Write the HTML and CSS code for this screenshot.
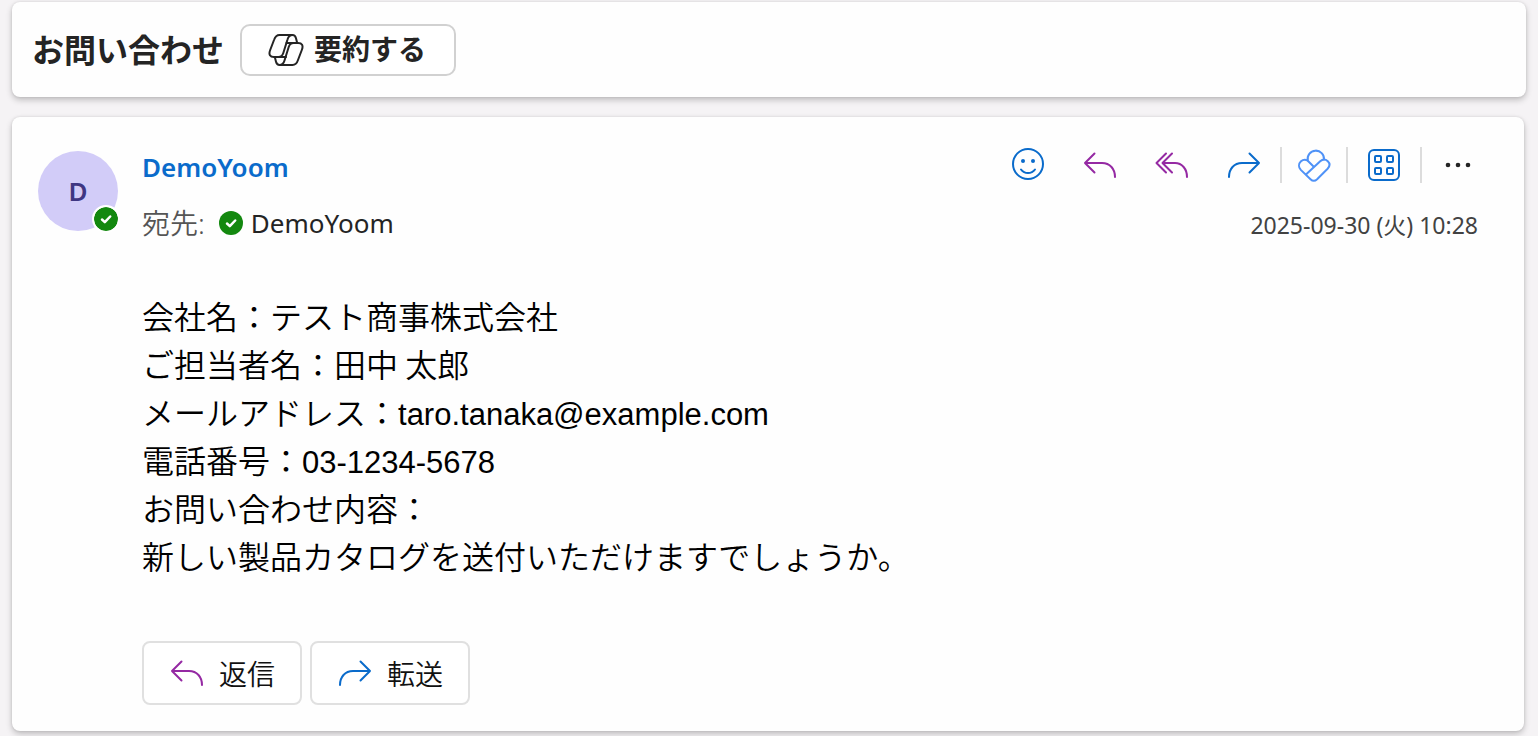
FILE: index.html
```html
<!DOCTYPE html>
<html lang="ja">
<head>
    <meta charset="UTF-8">
    <meta name="viewport" content="width=device-width, initial-scale=1.0">
    <title>お問い合わせ</title>
    <link rel="stylesheet" href="styles.css">
</head>
<body>
    <svg class="icon-defs" aria-hidden="true">
        <symbol id="icon-reply" viewBox="0 0 36 36">
            <path d="M12.500 6.500 3 16l9.500 9.500M3 16h17c8 0 13 6 13 14"/>
        </symbol>
        <symbol id="icon-reply-all" viewBox="0 0 36 36">
            <path d="M12 6.500 2.500 16l9.500 9.500M18 6.500 8.500 16l9.500 9.500M8.500 16H21c7 0 12 6 12 14"/>
        </symbol>
        <symbol id="icon-forward" viewBox="0 0 36 36">
            <path d="M23.500 6.500 33 16l-9.500 9.500M33 16H16C8 16 3 22 3 30"/>
        </symbol>
        <symbol id="icon-check" viewBox="0 0 24 24">
            <circle cx="12" cy="12" r="12"/>
            <path d="m8 12.500 2.800 2.600L16.200 9.500"/>
        </symbol>
    </svg>

    <header class="card subject">
        <h1>お問い合わせ</h1>
        <button class="summary-button" type="button">
            <svg class="icon" viewBox="0 0 36 36" aria-hidden="true">
                <path d="M24.500 3H11.500C8.500 3 7 5 6 8L2.200 18c-1.800 4.500-.2 7 3.800 7h4.500c2.500 0 4-1.500 4.800-4L19.500 7.500C20.300 4.700 21.800 3 24.500 3c2.200 0 3 1.300 3.500 3.200L29.200 11"/>
                <path d="M11.500 33h13c3 0 4.500-2 5.500-5l3.800-10c1.800-4.500.2-7-3.800-7h-4.500c-2.500 0-4 1.500-4.800 4l-4.200 13.500c-.8 2.800-2.300 4.500-5 4.500-2.200 0-3-1.300-3.500-3.200L6.800 25"/>
                <path d="M18.500 11H26M10 25h8"/>
            </svg>
            要約する
        </button>
    </header>

    <main class="card message">
        <div class="avatar">
            D
            <svg class="avatar-status" viewBox="0 0 24 24" aria-hidden="true"><use href="#icon-check"/></svg>
        </div>

        <div class="content">
            <div class="message-head">
                <div class="people">
                    <a class="sender" href="#">DemoYoom</a>
                    <div class="recipient">
                        <span class="to">宛先:</span>
                        <svg class="status" viewBox="0 0 24 24" aria-hidden="true"><use href="#icon-check"/></svg>
                        <span>DemoYoom</span>
                    </div>
                </div>

                <div class="meta">
                    <div class="toolbar">
                        <button type="button" class="blue" aria-label="リアクション">
                            <svg class="icon" viewBox="0 0 36 36">
                                <circle cx="18" cy="17" r="15"/>
                                <path d="M11 22.500c3.500 4.700 10.500 4.700 14 0"/>
                                <circle class="dot" cx="13" cy="14" r="2"/>
                                <circle class="dot" cx="23" cy="14" r="2"/>
                            </svg>
                        </button>
                        <button type="button" class="purple" aria-label="返信"><svg class="icon"><use href="#icon-reply"/></svg></button>
                        <button type="button" class="purple" aria-label="全員に返信"><svg class="icon"><use href="#icon-reply-all"/></svg></button>
                        <button type="button" class="blue" aria-label="転送"><svg class="icon"><use href="#icon-forward"/></svg></button>
                        <span class="divider"></span>
                        <button type="button" class="light-blue narrow" aria-label="アドイン">
                            <svg class="icon" viewBox="0 0 36 36">
                                <path d="M11.500 13.500c-2-1.200-4.500-1-6.500.8-2.600 2.400-2.600 6-.2 8.600l9.700 9.300c2 1.900 4.600 1.900 6.600 0l10.500-10.500c2.300-2.500 2.300-5.500.2-7.500-2.300-2.200-5.300-2.100-7.600.1L10.500 27"/>
                                <path d="M11.500 13.500 17.500 19.500M11.800 13.500a8.200 8.200 0 1 1 16.200-1"/>
                            </svg>
                        </button>
                        <span class="divider"></span>
                        <button type="button" class="blue" aria-label="アプリ">
                            <svg class="icon" viewBox="0 0 36 36">
                                <rect x="3" y="3" width="30" height="30" rx="5"/>
                                <rect x="9" y="9" width="6" height="6" rx="1"/>
                                <rect x="21" y="9" width="6" height="6" rx="1"/>
                                <rect x="9" y="21" width="6" height="6" rx="1"/>
                                <rect x="21" y="21" width="6" height="6" rx="1"/>
                            </svg>
                        </button>
                        <span class="divider"></span>
                        <button type="button" class="dark" aria-label="その他">
                            <svg class="icon" viewBox="0 0 36 36">
                                <circle class="dot" cx="8" cy="18" r="2.300"/>
                                <circle class="dot" cx="18" cy="18" r="2.300"/>
                                <circle class="dot" cx="28" cy="18" r="2.300"/>
                            </svg>
                        </button>
                    </div>
                    <time datetime="2025-09-30T10:28">2025-09-30 (火) 10:28</time>
                </div>
            </div>

            <p class="body-text">
                会社名：テスト商事株式会社<br>
                ご担当者名：田中 太郎<br>
                メールアドレス：<span class="latin">taro.tanaka@example.com</span><br>
                電話番号：<span class="latin">03-1234-5678</span><br>
                お問い合わせ内容：<br>
                新しい製品カタログを送付いただけますでしょうか。
            </p>

            <div class="actions">
                <button type="button"><svg class="icon purple"><use href="#icon-reply"/></svg>返信</button>
                <button type="button"><svg class="icon blue"><use href="#icon-forward"/></svg>転送</button>
            </div>
        </div>
    </main>
</body>
</html>
```
FILE: styles.css
```css
* {
    box-sizing: border-box;
}
body {
    margin: 0;
    padding: 2px 12px 5px;
    background: #f5f3f5;
    color: #242424;
    font-family: "Noto Sans", "Noto Sans CJK JP", sans-serif;
}
h1, p {
    margin: 0;
}
button {
    font-family: inherit;
    color: inherit;
    cursor: pointer;
}
.icon-defs {
    display: none;
}
.icon {
    width: 36px;
    height: 36px;
    fill: none;
    stroke: currentColor;
    stroke-width: 2;
    stroke-linecap: round;
    stroke-linejoin: round;
    flex: none;
}
.dot {
    fill: currentColor;
    stroke: none;
}
.card {
    background: #fefefe;
    border-radius: 8px;
    box-shadow: 0 3px 6px rgba(0, 0, 0, 0.22), 0 0 3px rgba(0, 0, 0, 0.1);
}
.subject {
    display: flex;
    align-items: center;
    gap: 16px;
    min-height: 95px;
    padding: 0 20px;
}
.subject h1 {
    font-size: 32px;
    line-height: 48px;
    font-weight: 600;
}
.summary-button {
    display: flex;
    align-items: center;
    gap: 10px;
    height: 52px;
    padding: 0 28px 4px 26px;
    border: 2px solid #d1d1d1;
    border-radius: 10px;
    background: #fff;
    font-size: 28px;
    font-weight: 600;
}
.summary-button .icon {
    margin-top: 4px;
}
.message {
    display: flex;
    gap: 24px;
    margin: 20px 2px 0 0;
    padding: 26px;
}
.avatar {
    position: relative;
    display: flex;
    align-items: center;
    justify-content: center;
    flex: none;
    width: 80px;
    height: 80px;
    margin-top: 8px;
    border-radius: 50%;
    background: #d2ccf8;
    color: #3f3682;
    font-size: 26px;
    font-weight: 600;
}
.avatar-status,
.status {
    width: 24px;
    height: 24px;
    fill: #13880f;
    stroke: none;
}
#icon-check path {
    fill: none;
    stroke: #fff;
    stroke-width: 2.5;
    stroke-linecap: round;
    stroke-linejoin: round;
}
.avatar-status {
    position: absolute;
    right: -2px;
    bottom: -2px;
    width: 28px;
    height: 28px;
    border: 2px solid #fff;
    border-radius: 50%;
    background: #fff;
}
.content {
    flex: 1;
    min-width: 0;
}
.message-head {
    display: flex;
    justify-content: space-between;
}
.people {
    padding-top: 4px;
    font-size: 26px;
}
.sender {
    display: block;
    color: #0a6bcb;
    font-weight: 600;
    line-height: 40px;
    text-decoration: none;
}
.recipient {
    display: flex;
    align-items: center;
    margin-top: 16px;
    line-height: 40px;
}
.status {
    margin: 0 8px 0 14px;
}
.to {
    color: #555;
    font-size: 28px;
    font-weight: 350;
}
.meta {
    display: flex;
    flex-direction: column;
    align-items: flex-end;
}
.toolbar {
    display: flex;
    align-items: center;
    height: 44px;
    margin-right: 4px;
}
.toolbar button {
    display: flex;
    align-items: center;
    justify-content: center;
    width: 72px;
    height: 44px;
    padding: 0;
    border: 0;
    background: none;
}
.toolbar .narrow {
    width: 64px;
}
.divider {
    width: 2px;
    height: 36px;
    background: #dcdcdc;
}
.blue {
    color: #0a6bcb;
}
.purple {
    color: #9529a3;
}
.light-blue {
    color: #4f92f7;
}
.dark {
    color: #242424;
}
time {
    margin: 18px 20px 0 0;
    color: #424242;
    font-size: 23px;
    line-height: 40px;
}
.body-text {
    margin-top: 46px;
    color: #000;
    font-family: "Noto Sans CJK JP", sans-serif;
    font-size: 32px;
    font-weight: 350;
    line-height: 48px;
}
.latin {
    font-family: "Liberation Sans", sans-serif;
    font-size: 31px;
    line-height: 1;
}
.actions {
    display: flex;
    gap: 8px;
    margin-top: 62px;
}
.actions button {
    display: flex;
    align-items: center;
    justify-content: center;
    gap: 14px;
    width: 160px;
    height: 64px;
    padding: 0;
    border: 2px solid #e0e0e0;
    border-radius: 8px;
    background: #fff;
    color: #111;
    font-size: 28px;
    font-weight: 350;
}
```
